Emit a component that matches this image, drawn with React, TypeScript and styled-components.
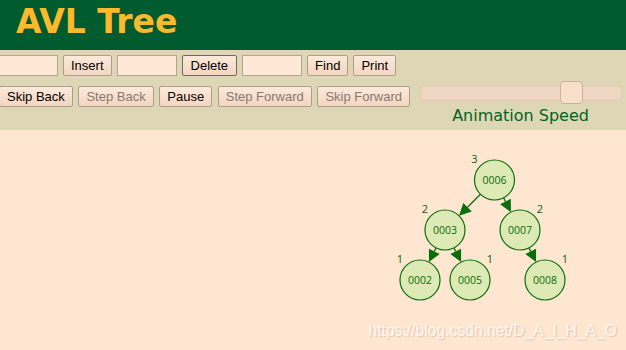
import styled, { createGlobalStyle } from "styled-components";

const GlobalStyle = createGlobalStyle`
  body {
    margin: 0;
    overflow: hidden;
    background: #ffe6d1;
  }
`;

const Page = styled.div`
  width: 626px;
  height: 350px;
  display: flex;
  flex-direction: column;
`;

const Header = styled.header`
  height: 50px;
  box-sizing: border-box;
  padding: 2px 16px 0;
  background: #005b2f;
`;

const Title = styled.h1`
  margin: 0;
  font-family: "DejaVu Sans", Verdana, sans-serif;
  font-weight: bold;
  font-size: 33px;
  line-height: 40px;
  color: #fdb92c;
`;

const Toolbar = styled.div`
  height: 80px;
  box-sizing: border-box;
  padding-top: 5px;
  background: #ddd7b6;
  display: flex;
  flex-direction: column;
  gap: 10px;
`;

const Row = styled.div<{ $shift: number; $gap: number }>`
  display: flex;
  align-items: flex-start;
  gap: ${(p) => p.$gap}px;
  margin-left: ${(p) => p.$shift}px;
`;

const TextBox = styled.input`
  width: 60px;
  height: 21px;
  box-sizing: border-box;
  margin: 0;
  border: 1px solid #aea595;
  background: #ffe8d6;
  outline: none;
`;

const Button = styled.button<{ $focused?: boolean }>`
  height: 21px;
  margin: 0;
  padding: 0 ${(p) => (p.$focused ? 8 : 7)}px;
  box-sizing: border-box;
  border: 1px solid ${(p) => (p.$focused ? "#6f6a64" : "#ad9d8e")};
  border-radius: 2px;
  background: linear-gradient(#fde9da, #f3d6c0);
  font-family: "Liberation Sans", Arial, sans-serif;
  font-size: 13px;
  line-height: 19px;
  color: #000;
  white-space: nowrap;

  &:disabled {
    color: #857a73;
  }
`;

const SpeedControl = styled.div`
  margin-left: 4px;
  margin-top: -1px;
  width: 202px;
  display: flex;
  flex-direction: column;
  align-items: center;
`;

const Track = styled.div`
  position: relative;
  width: 100%;
  height: 16px;
  box-sizing: border-box;
  border: 1px solid #e2c9b4;
  border-radius: 4px;
  background: #efd6c2;
`;

const Thumb = styled.div`
  position: absolute;
  left: 139px;
  top: -5px;
  width: 23px;
  height: 23px;
  box-sizing: border-box;
  border: 1px solid #c9b19b;
  border-radius: 4px;
  background: #f8dfca;
`;

const SpeedLabel = styled.div`
  margin-top: 6px;
  font-family: "DejaVu Sans", Verdana, sans-serif;
  font-size: 16px;
  line-height: 18px;
  color: #05621f;
`;

const Canvas = styled.div`
  position: relative;
  flex: 1;
  background: #ffe6d1;
`;

const Watermark = styled.div`
  position: absolute;
  right: 9px;
  bottom: 10px;
  font-family: "Liberation Sans", Arial, sans-serif;
  font-size: 15.7px;
  line-height: 18px;
  color: rgba(255, 255, 255, 0.8);
  text-shadow: 1px 1px 1px rgba(150, 120, 100, 0.3);
`;

type TreeNode = { id: string; x: number; y: number; h: number; side: -1 | 1 };

const nodes: TreeNode[] = [
  { id: "0006", x: 494.5, y: 50, h: 3, side: -1 },
  { id: "0003", x: 445, y: 100, h: 2, side: -1 },
  { id: "0007", x: 520, y: 100, h: 2, side: 1 },
  { id: "0002", x: 420, y: 150, h: 1, side: -1 },
  { id: "0005", x: 470, y: 150, h: 1, side: 1 },
  { id: "0008", x: 545, y: 150, h: 1, side: 1 },
];

const edges: [string, string][] = [
  ["0006", "0003"],
  ["0006", "0007"],
  ["0003", "0002"],
  ["0003", "0005"],
  ["0007", "0008"],
];

const R = 20;
const GREEN = "#0a6e0a";

const Edge = ({ from, to }: { from: TreeNode; to: TreeNode }) => {
  const dx = to.x - from.x;
  const dy = to.y - from.y;
  const len = Math.hypot(dx, dy);
  const ux = dx / len;
  const uy = dy / len;
  const sx = from.x + ux * R;
  const sy = from.y + uy * R;
  const tx = to.x - ux * R;
  const ty = to.y - uy * R;
  const head = 12;
  const half = 6;
  const bx = tx - ux * head;
  const by = ty - uy * head;
  const px = -uy * half;
  const py = ux * half;
  return (
    <g>
      <line x1={sx} y1={sy} x2={bx} y2={by} stroke={GREEN} strokeWidth={1.3} />
      <polygon
        points={`${tx},${ty} ${bx + px},${by + py} ${bx - px},${by - py}`}
        fill={GREEN}
      />
    </g>
  );
};

const Tree = () => {
  const byId = Object.fromEntries(nodes.map((n) => [n.id, n]));
  return (
    <svg width={626} height={220} style={{ display: "block" }}>
      {edges.map(([a, b]) => (
        <Edge key={a + b} from={byId[a]} to={byId[b]} />
      ))}
      {nodes.map((n) => (
        <g key={n.id}>
          <circle
            cx={n.x}
            cy={n.y}
            r={R}
            fill="#deeab6"
            stroke={GREEN}
            strokeWidth={1.2}
          />
          <text
            x={n.x}
            y={n.y + 3.8}
            textAnchor="middle"
            fontFamily="'Open Sans', sans-serif"
            fontSize={10.5}
            fill="#0b6a0b"
          >
            {n.id}
          </text>
          <text
            x={n.x + n.side * 20}
            y={n.y - 17}
            textAnchor="middle"
            fontFamily="'Open Sans', sans-serif"
            fontSize={11}
            fill="#0b5f0b"
          >
            {n.h}
          </text>
        </g>
      ))}
    </svg>
  );
};

export default function App() {
  return (
    <>
      <GlobalStyle />
      <Page>
        <Header>
          <Title>AVL Tree</Title>
        </Header>
        <Toolbar>
          <Row $shift={-2} $gap={5}>
            <TextBox />
            <Button>Insert</Button>
            <TextBox />
            <Button $focused>Delete</Button>
            <TextBox />
            <Button>Find</Button>
            <Button>Print</Button>
          </Row>
          <Row $shift={-1} $gap={5.6}>
            <Button>Skip Back</Button>
            <Button disabled>Step Back</Button>
            <Button>Pause</Button>
            <Button disabled>Step Forward</Button>
            <Button disabled>Skip Forward</Button>
            <SpeedControl>
              <Track>
                <Thumb />
              </Track>
              <SpeedLabel>Animation Speed</SpeedLabel>
            </SpeedControl>
          </Row>
        </Toolbar>
        <Canvas>
          <Tree />
          <Watermark>https://blog.csdn.net/D_A_I_H_A_O</Watermark>
        </Canvas>
      </Page>
    </>
  );
}
